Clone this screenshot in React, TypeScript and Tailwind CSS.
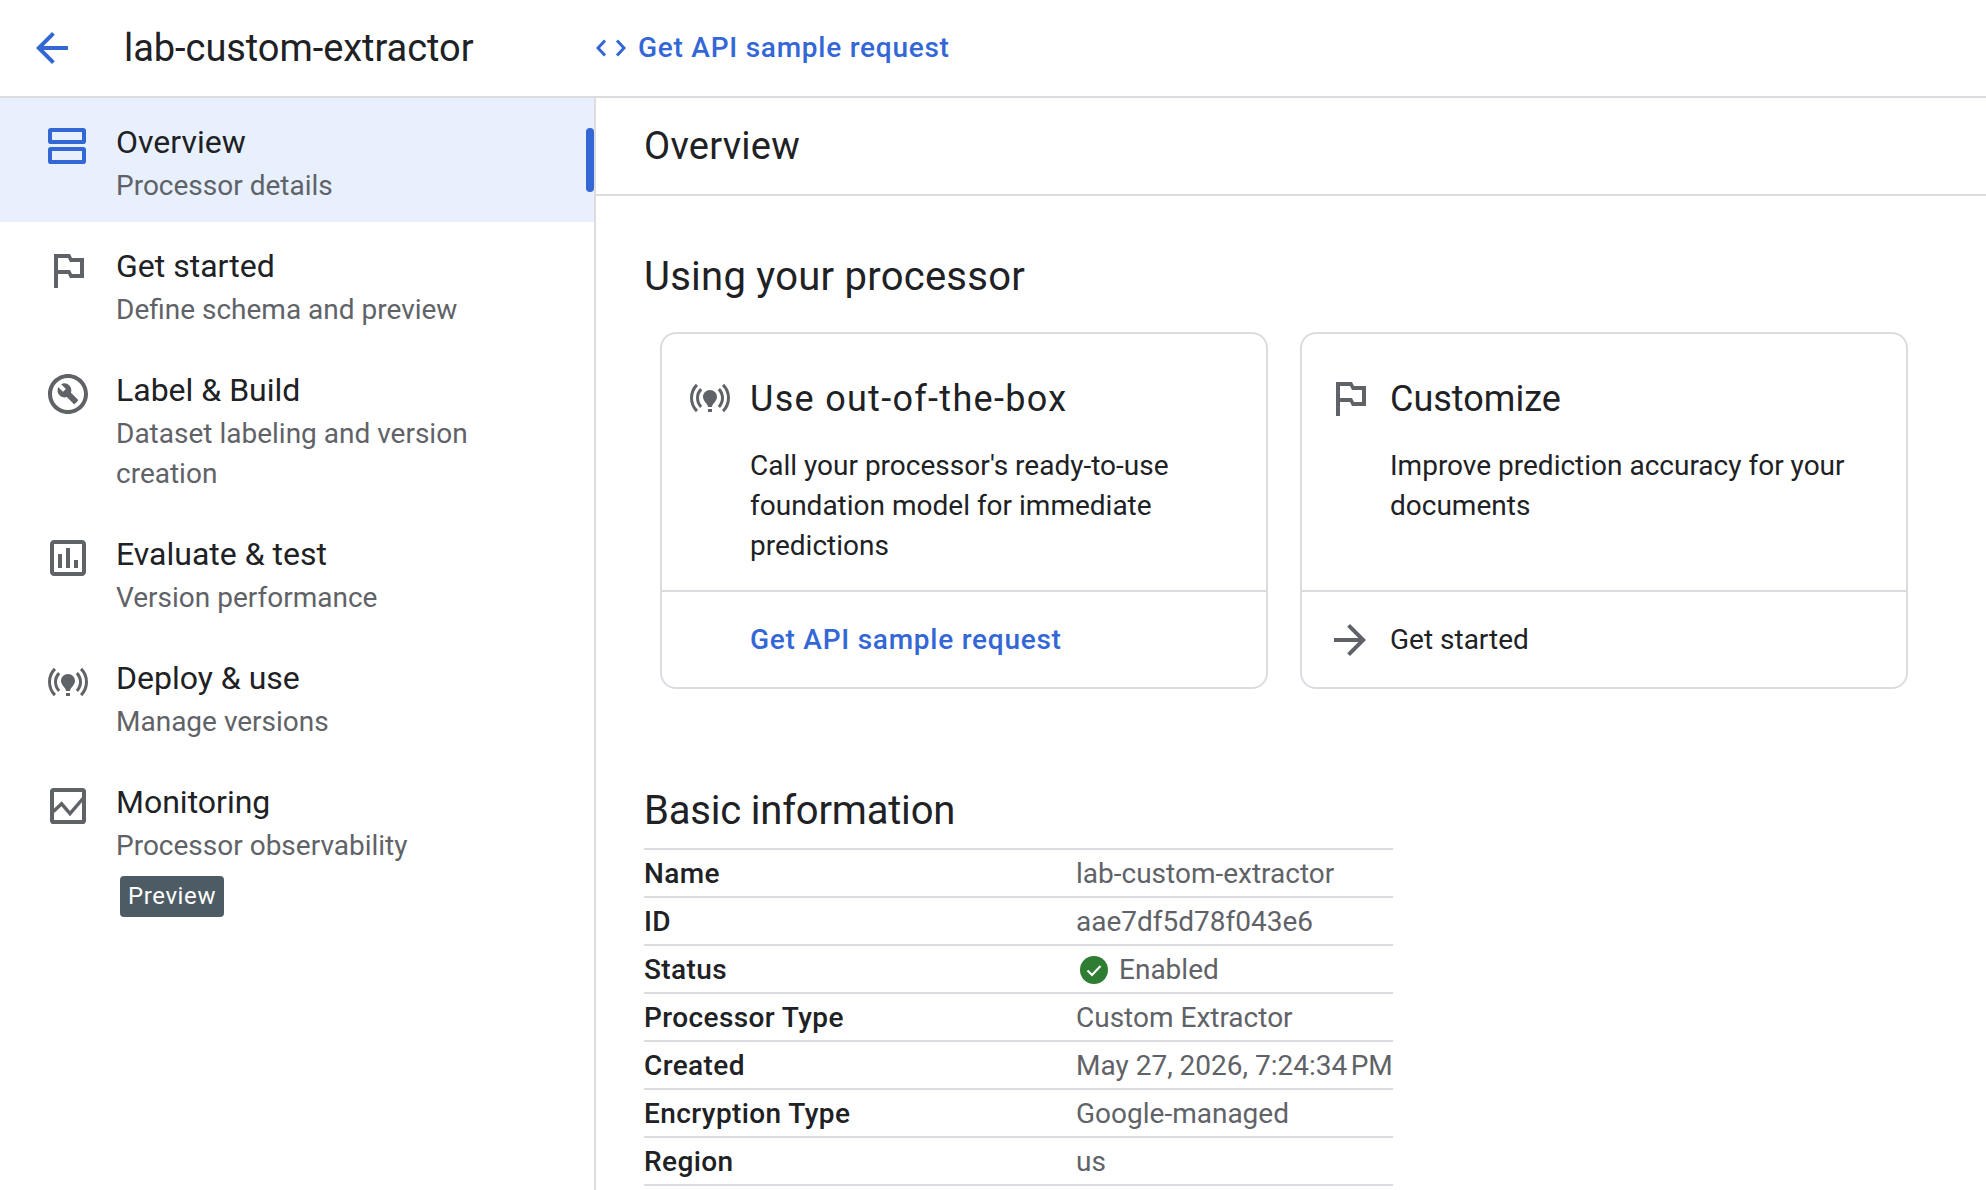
import { MdArrowBack, MdArrowForward, MdOnlinePrediction, MdOutlineAssessment, MdOutlineBuildCircle, MdOutlinedFlag } from 'react-icons/md';

const navItems = [
  { title: 'Get started', sub: 'Define schema and preview', icon: <MdOutlinedFlag size={48} /> },
  { title: 'Label & Build', sub: 'Dataset labeling and version creation', icon: <MdOutlineBuildCircle size={48} /> },
  { title: 'Evaluate & test', sub: 'Version performance', icon: <MdOutlineAssessment size={48} /> },
  { title: 'Deploy & use', sub: 'Manage versions', icon: <MdOnlinePrediction size={48} /> },
];

const basicInfo = [
  { label: 'Name', value: 'lab-custom-extractor' },
  { label: 'ID', value: 'aae7df5d78f043e6' },
  { label: 'Status', value: 'Enabled' },
  { label: 'Processor Type', value: 'Custom Extractor' },
  { label: 'Created', value: 'May 27, 2026, 7:24:34\u202fPM' },
  { label: 'Encryption Type', value: 'Google-managed' },
  { label: 'Region', value: 'us' },
];

function AgendaIcon() {
  return (
    <svg width="48" height="48" viewBox="0 0 24 24" fill="none" stroke="currentColor" strokeWidth="2">
      <rect x="3" y="4" width="17" height="6" rx="0.4" />
      <rect x="3" y="13.5" width="17" height="6.5" rx="0.4" />
    </svg>
  );
}

function MonitorIcon() {
  return (
    <svg width="48" height="48" viewBox="0 0 24 24" fill="none" stroke="currentColor">
      <rect x="4" y="4" width="16" height="16" rx="0.8" strokeWidth="2" />
      <path d="M4.7 14.8 8.8 10.9 13 15.8 19.7 8" strokeWidth="1.7" />
    </svg>
  );
}

function CodeIcon() {
  return (
    <svg width="30" height="18" viewBox="0 0 30 18" fill="none" stroke="currentColor" strokeWidth="3">
      <path d="M9 1.5 2 9l7 7.5M21 1.5 28 9l-7 7.5" />
    </svg>
  );
}

function NavRow({ title, sub, icon }: { title: string; sub: string; icon: React.ReactNode }) {
  return (
    <div className="flex pl-[44px] pr-[70px] pt-[24px] pb-[16px] gap-[24px]">
      <div className="w-[48px] h-[48px] shrink-0 text-[#5f6368]">{icon}</div>
      <div className="-mt-[4px]">
        <div className="text-[32px] leading-[48px] text-[#202124]">{title}</div>
        <div className="text-[28px] leading-[40px] text-[#5f6368]">{sub}</div>
      </div>
    </div>
  );
}

function Card({ icon, title, titleClass, body, footerIcon, footer, footerClass }: {
  icon: React.ReactNode;
  title: string;
  titleClass: string;
  body: string;
  footerIcon?: React.ReactNode;
  footer: string;
  footerClass: string;
}) {
  return (
    <div className="w-[608px] h-[357px] flex flex-col border-2 border-[#dadce0] rounded-[16px]">
      <div className="flex-1 flex pl-[24px] pr-[20px] pt-[40px] gap-[16px] border-b-2 border-[#dadce0]">
        <div className="w-[48px] h-[48px] shrink-0 text-[#5f6368]">{icon}</div>
        <div>
          <div className={titleClass}>{title}</div>
          <div className="mt-[23px] text-[28px] leading-[40px] text-[#202124]">{body}</div>
        </div>
      </div>
      <div className="h-[95px] flex items-center pl-[24px] gap-[16px]">
        <div className="w-[48px] h-[48px] shrink-0 text-[#5f6368]">{footerIcon}</div>
        <div className={footerClass}>{footer}</div>
      </div>
    </div>
  );
}

export default function App() {
  return (
    <div className="w-[1986px] h-[1190px] overflow-hidden bg-white flex flex-col [font-family:Roboto,sans-serif]">
      {/* Top bar */}
      <header className="h-[98px] shrink-0 flex items-center border-b-2 border-[#dadce0]">
        <div className="w-[596px] shrink-0 flex items-center pl-[28px] gap-[48px]">
          <div className="text-[#3367d6]"><MdArrowBack size={48} /></div>
          <div className="text-[38px] leading-[48px] tracking-[-0.05px] text-[#202124]">lab-custom-extractor</div>
        </div>
        <div className="flex items-center gap-[12px] text-[#3367d6]">
          <CodeIcon />
          <span className="text-[28px] leading-[40px] font-medium tracking-[0.75px]">Get API sample request</span>
        </div>
      </header>

      <div className="flex-1 flex min-h-0">
        {/* Sidebar */}
        <aside className="w-[596px] shrink-0 border-r-2 border-[#dadce0]">
          <div className="relative h-[124px] bg-[#e8f0fe] flex pl-[44px] pt-[24px] gap-[24px]">
            <div className="w-[48px] h-[48px] shrink-0 text-[#3367d6]"><AgendaIcon /></div>
            <div className="-mt-[4px]">
              <div className="text-[32px] leading-[48px] text-[#202124]">Overview</div>
              <div className="text-[28px] leading-[40px] text-[#5f6368]">Processor details</div>
            </div>
            <div className="absolute right-0 top-[30px] w-[8px] h-[64px] rounded-[4px] bg-[#3367d6]" />
          </div>
          {navItems.map((item) => (
            <NavRow key={item.title} title={item.title} sub={item.sub} icon={item.icon} />
          ))}
          <NavRow title="Monitoring" sub="Processor observability" icon={<MonitorIcon />} />
          <div className="-mt-[6px] ml-[120px] w-[104px] h-[41px] rounded-[4px] bg-[#4d5c64] flex items-center justify-center pb-[2px] text-[24px] tracking-[0.6px] text-white">
            Preview
          </div>
        </aside>

        {/* Main */}
        <main className="flex-1 min-w-0">
          <div className="h-[98px] flex items-center pl-[48px] border-b-2 border-[#dadce0] text-[38px] tracking-[0.25px] text-[#202124]">
            Overview
          </div>
          <div className="pl-[48px]">
            <h2 className="mt-[57px] text-[40px] leading-[48px] tracking-[0.25px] text-[#202124]">Using your processor</h2>
            <div className="mt-[31px] ml-[16px] flex gap-[32px]">
              <Card
                icon={<MdOnlinePrediction size={48} />}
                title="Use out-of-the-box"
                titleClass="pt-[1px] text-[36px] leading-[48px] tracking-[1.3px] text-[#202124]"
                body="Call your processor's ready-to-use foundation model for immediate predictions"
                footer="Get API sample request"
                footerClass="text-[28px] font-medium tracking-[0.75px] text-[#3367d6]"
              />
              <Card
                icon={<MdOutlinedFlag size={48} />}
                title="Customize"
                titleClass="pt-[1px] text-[36px] leading-[48px] text-[#202124]"
                body="Improve prediction accuracy for your documents"
                footerIcon={<MdArrowForward size={48} />}
                footer="Get started"
                footerClass="text-[28px] text-[#202124]"
              />
            </div>
            <h2 className="mt-[98px] text-[40px] leading-[48px] tracking-[-0.2px] text-[#202124]">Basic information</h2>
            <div className="mt-[13px] w-[749px] border-t-2 border-[#dadce0]">
              {basicInfo.map((row) => (
                <div key={row.label} className="h-[48px] flex items-center pt-[2px] border-b-2 border-[#dadce0] text-[28px]">
                  <div className="w-[432px] shrink-0 font-medium tracking-[0.4px] text-[#202124]">{row.label}</div>
                  {row.label === 'Status' ? (
                    <div className="flex items-center gap-[11px] pl-[4px] text-[#5f6368]">
                      <svg width="28" height="28" viewBox="0 0 28 28" fill="none">
                        <circle cx="14" cy="14" r="14" fill="#2e7d32" />
                        <path d="M7.5 14.5 12 19l8.5-9" stroke="#fff" strokeWidth="2.2" />
                      </svg>
                      {row.value}
                    </div>
                  ) : (
                    <div className="whitespace-nowrap text-[#5f6368]">{row.value}</div>
                  )}
                </div>
              ))}
            </div>
          </div>
        </main>
      </div>
    </div>
  );
}
